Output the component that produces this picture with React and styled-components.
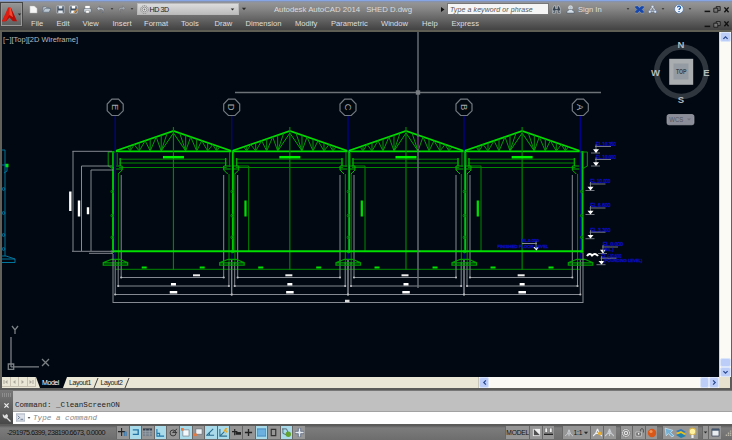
import React from "react";
import styled, { createGlobalStyle } from "styled-components";

const GlobalStyle = createGlobalStyle`
  * { box-sizing: border-box; }
  body { margin: 0; overflow: hidden; background: #555; }
`;

const Window = styled.div`
  width: 732px;
  height: 440px;
  display: flex;
  flex-direction: column;
  overflow: hidden;
  background: #5b5b5a;
  font-family: "Liberation Sans", Arial, sans-serif;
  font-size: 7.6px;
  color: #dedede;
  white-space: nowrap;
`;

const Header = styled.header`
  height: 30px;
  display: flex;
  flex: none;
  border-top: 1px solid #86a5e4;
  background: linear-gradient(#8292b5 0, #949494 2px, #858585 8px, #686868 17px, #454545 28px);
`;

const AppButton = styled.div`
  width: 23px;
  height: 25px;
  margin: 1px 1px 0 0;
  display: flex;
  align-items: center;
  justify-content: center;
  border: 1px solid #454545;
  box-shadow: inset 0 0 0 1px #999;
  background: linear-gradient(#969696, #5e5e5e);

  svg { flex: none; }
`;

const HeaderBody = styled.div`
  flex: 1;
  display: flex;
  flex-direction: column;
`;

const TitleRow = styled.div`
  height: 16px;
  padding-left: 2.5px;
  display: flex;
  align-items: center;
`;

const Cell = styled.span`
  width: ${(p) => p.$w}px;
  flex: none;
  height: 100%;
  display: flex;
  align-items: center;
  justify-content: ${(p) => (p.$left ? "flex-start" : "center")};
  padding-left: ${(p) => (p.$left ? 2 : 0)}px;
`;

const Title = styled(Cell)`
  font-size: 7.8px;
  gap: 6px;
  padding-top: 1px;
  color: #dadada;
`;

const Field = styled.div`
  width: ${(p) => p.$w}px;
  height: 12px;
  margin-left: ${(p) => p.$gap || 0}px;
  padding: 0 3px 0 2px;
  flex: none;
  display: flex;
  align-items: center;
  gap: 1px;
  border: 1px solid ${(p) => (p.$search ? "#777" : "#b9b9b9")};
  background: ${(p) => (p.$search ? "#f5f5f5" : "linear-gradient(#dcdcdc, #bdbdbd)")};
  color: ${(p) => (p.$search ? "#555" : "#222")};
  font-style: ${(p) => (p.$search ? "italic" : "normal")};
  font-size: ${(p) => (p.$search ? 7 : 7.2)}px;
  letter-spacing: ${(p) => (p.$search ? 0.1 : -0.5)}px;
`;

const Fill = styled.span`
  flex: 1;
`;

const MenuRow = styled.nav`
  height: 13px;
  padding-left: 7px;
  display: flex;
  align-items: center;
`;

const MenuItem = styled.span`
  width: ${(p) => p.$w}px;
  flex: none;
`;

const MenuControls = styled.span`
  margin-left: auto;
  padding-right: 1px;
  height: 100%;
  display: flex;
`;

const Workspace = styled.main`
  height: 347px;
  flex: none;
  display: flex;
  border: 2px solid #626159;
  border-top-color: #5f5e55;
  border-bottom: 0;
`;

const Viewport = styled.div`
  width: 716.5px;
  height: 345px;
  flex: none;
  background: #010811;
`;

const VScroll = styled.div`
  flex: 1;
  display: flex;
  flex-direction: column;
  background: #fbfaf5;
  border-left: 1px solid #d5d3ca;
`;

const ScrollKey = styled.div`
  width: ${(p) => p.$w || 11}px;
  height: ${(p) => p.$h || 10}px;
  flex: none;
  display: flex;
  align-items: center;
  justify-content: center;
  border: 1px solid #dce6fb;
  border-radius: 2px;
  background: #bccdf8;
`;

const TabBar = styled.div`
  height: 11px;
  flex: none;
  display: flex;
  margin: 0 2px;
  background: #ebe7d6;
  color: #1d1d1d;
  font-size: 7px;
  letter-spacing: -0.4px;
`;

const NavKey = styled.div`
  width: 8.5px;
  height: 10px;
  display: flex;
  align-items: center;
  justify-content: center;
  border-right: 1px solid #c6c1b0;
  border-bottom: 1px solid #c6c1b0;
`;

const ModelTab = styled.div`
  width: 31px;
  padding-right: 2px;
  display: flex;
  align-items: center;
  justify-content: center;
  color: #fff;
  background: #010811;
  clip-path: polygon(0 0, 100% 0, 87% 100%, 13% 100%);
`;

const LayoutTab = styled.div`
  width: 31.5px;
  padding-left: 2px;
  display: flex;
  align-items: center;
  justify-content: space-between;
`;

const HScroll = styled.div`
  width: 241px;
  display: flex;
  background: #fbf9f3;
  border-left: 1px solid #c9c6ba;
`;

const Corner = styled.div`
  width: 11px;
  background: #e6e2cf;
`;

const CommandPanel = styled.section`
  height: 34px;
  margin-top: 2px;
  flex: none;
  display: flex;
  border-top: 1px solid #777;
`;

const CommandGrip = styled.div`
  width: 13px;
  display: flex;
  flex-direction: column;
  align-items: center;
  justify-content: space-between;
  padding: 2px 0;
  background: linear-gradient(#777, #484848);
`;

const CommandBody = styled.div`
  flex: 1;
  display: flex;
  flex-direction: column;
  font-family: "Liberation Mono", "Courier New", monospace;
`;

const History = styled.div`
  height: 20.5px;
  padding: 9.5px 0 0 2px;
  line-height: 9px;
  background: #c0c0c0;
  border-bottom: 1px solid #a2a2a2;
  color: #222;
`;

const Prompt = styled.div`
  flex: 1;
  display: flex;
  align-items: center;
  padding-left: 3px;
  gap: 2px;
  background: #fff;
  color: #898989;
  font-style: italic;
  font-size: 7.65px;
`;

const StatusBar = styled.footer`
  height: 15px;
  margin-top: auto;
  flex: none;
  display: flex;
  align-items: center;
  background: linear-gradient(#555, #7c7c7c 3px, #6d6d6d);
  color: #121212;
`;

const Coordinates = styled.div`
  width: 116px;
  padding-left: 7px;
  flex: none;
  font-size: 7.2px;
  letter-spacing: -0.56px;
`;

const Toggle = styled.div`
  width: ${(p) => p.$w || 12.6}px;
  height: 13px;
  margin-left: ${(p) => p.$gap || 0}px;
  flex: none;
  display: flex;
  align-items: center;
  justify-content: center;
  gap: 1px;
  border-left: 1px solid ${(p) => (p.$plain ? "transparent" : "#686868")};
  background: ${(p) => (p.$on ? "#a9dbea" : p.$plain ? "transparent" : "#969696")};
  font-size: 6.7px;
  letter-spacing: -0.2px;

  svg { flex: none; }
`;

const art = {
  logo: <><path d="M5 0.5 0 9.5h2.7L5 7l2.3 2.5H10L6 .5z" fill="#b80c08" /><path d="M5 .5 2.6 6.8 5 5.3l2.4 1.5L5.8.5z" fill="#f24a32" /><path d="M5 0v5L2.5 9.5H0L4 .5z" fill="#db1d12" /></>,
  file: <path d="M1 1h5l3 3v5H1z" fill="#f6f6f6" stroke="#aaa" strokeWidth=".5" />,
  open: <><path d="M1 8V2h3l1 1h3v2" fill="#d0d6dc" stroke="#697684" /><path d="m1 8 2-4h7L8 8z" fill="#bdcad5" stroke="#566574" strokeWidth=".7" /></>,
  save: <><path d="M1 1h8v8H1z" fill="#405064" stroke="#cbd2da" strokeWidth=".7" /><path d="M3 1h4v3H3zM2.5 6h5v3h-5z" fill="#e4e9ee" /></>,
  saveas: <><path d="M1 1h8v8H1z" fill="#405064" stroke="#e4e7ea" strokeWidth=".7" /><path d="M3 1h4v3H3zM2.5 6h4v3h-4z" fill="#fff" /><path d="m5 8 4-4 1 1-4 4z" fill="#e6a54e" stroke="#8e501d" strokeWidth=".4" /></>,
  print: <><path d="M2.5 1h5v4h-5z" fill="#fff" /><path d="M1 4h8v4H1z" fill="#dce4eb" stroke="#59636d" strokeWidth=".7" /><path d="M3 6h4v3H3z" fill="#fff" stroke="#666" strokeWidth=".5" /></>,
  undo: <path d="M4 1 1 4l3 3V5h2c2 0 2 2 1 4 3-3 2-6-1-6H4z" fill="#c5ced9" stroke="#505966" strokeWidth=".5" />,
  redo: <path d="m6 1 3 3-3 3V5H4C2 5 2 7 3 9 0 6 1 3 4 3h2z" fill="#a3a9af" stroke="#5d6368" strokeWidth=".4" />,
  down: <path d="m1.5 3 3.5 4 3.5-4z" fill="#292929" />,
  right: <path d="m2 0 7 5-7 5z" fill="#111" />,
  gear: <><circle cx="5" cy="5" r="4.2" fill="#e2e2e2" stroke="#777" strokeWidth="1" strokeDasharray="1.6 .7" /><circle cx="5" cy="5" r="2.7" fill="none" stroke="#888" /><circle cx="5" cy="5" r="1" fill="#777" /></>,
  binoculars: <><path d="M2 1h2v3h2V1h2l1.5 4v4H6V6H4v3H.5V5z" fill="#344250" stroke="#cbd0d5" strokeWidth=".7" /><path d="M2 6v2M8 6v2" stroke="#ddd" /></>,
  user: <><circle cx="5" cy="3" r="2.2" fill="#b9c8d6" stroke="#eee" strokeWidth=".7" /><path d="M1 9V7l3-2h2l3 2v2z" fill="#d2dde7" stroke="#455769" strokeWidth=".6" /></>,
  exchange: <path d="M0 1h3l2 2 2-2h3v2L8 5l2 2v2H7L5 7 3 9H0V7l2-2-2-2z" fill="#1646aa" stroke="#9db2d5" strokeWidth=".5" />,
  network: <><path d="M5 2 2 7h6z" fill="none" stroke="#c4d3e6" strokeWidth="1.2" /><circle cx="5" cy="2" r="1.6" fill="#dfe9f5" stroke="#405880" strokeWidth=".5" /><circle cx="2" cy="7.5" r="1.6" fill="#dfe9f5" stroke="#405880" strokeWidth=".5" /><circle cx="8" cy="7.5" r="1.6" fill="#dfe9f5" stroke="#405880" strokeWidth=".5" /></>,
  help: <><circle cx="5" cy="5" r="4.4" fill="#ecf5ff" stroke="#365f95" strokeWidth=".5" /><path d="M3.5 3.5c.2-2 3.2-1.6 3 .1C6.4 4.7 5 4.7 5 6M5 7v1" fill="none" stroke="#1554a9" strokeWidth="1.2" /></>,
  min: <path d="M2 8h7" stroke="#131313" strokeWidth="1.9" />,
  restore: <><path d="M4 2h5v5H4z" fill="#777" stroke="#111" /><path d="M1 4h5v5H1z" fill="#777" stroke="#111" /></>,
  close: <path d="m2 2 6 7m0-7L2 9" stroke="#111" strokeWidth="2" />,
  closeLight: <path d="m2 2 6 6m0-6L2 8" stroke="#eee" strokeWidth="1.8" />,
  wrench: <path d="M1 1l2 2 2-2c2 1 2 3 1 4l4 4-1 1-4-4C3 7 0 4 1 1z" fill="#ddd" />,
  prompt: <><path d="M0 1h10v8H0z" fill="#dce1ea" stroke="#a2abb8" /><path d="m2 3 2 2-2 2m3 0h3" fill="none" stroke="#627187" /></>,
  up: <path d="m2 7 3-3 3 3" fill="none" stroke="#2b4a91" strokeWidth="1.8" />,
  chevronDown: <path d="m2 3 3 3 3-3" fill="none" stroke="#2b4a91" strokeWidth="1.8" />,
  left: <path d="M7 2 4 5l3 3" fill="none" stroke="#2b4a91" strokeWidth="1.8" />,
  next: <path d="m3 2 3 3-3 3" fill="none" stroke="#2b4a91" strokeWidth="1.8" />,
  infer: <><path d="M4 0v9M0 4h8" stroke="#222" strokeWidth="1.2" /><path d="M7 4v5M9 4v5" stroke="#2675b6" /></>,
  snap: <path d="M2 2h6v5H2" fill="none" stroke="#2475a6" strokeWidth="1.5" />,
  grid: <><path d="M0 1h10v8H0z" fill="#74808c" /><path d="M0 1.5h10" stroke="#333d4b" strokeWidth="2" /><path d="M0 4h10M0 6.5h10M3 1v8M7 1v8" stroke="#a6adb3" strokeWidth=".6" /></>,
  ortho: <path d="M1 1v8h8M1 6h3v3" fill="none" stroke="#2377a8" strokeWidth="1.2" />,
  polar: <><circle cx="4.5" cy="5.5" r="3.3" fill="none" stroke="#333" /><path d="m4 5 5-4M4 5h5" stroke="#333" /></>,
  osnap: <><path d="M2 2h7v7H2z" fill="#f2f8fb" stroke="#8794a0" /><path d="M0 0h3v3H0z" fill="#e9783b" /></>,
  cube: <><path d="M2 1h7v6H2z" fill="#edf1f4" stroke="#515b64" strokeWidth=".6" /><path d="M0 6h3v3H0z" fill="#e9783b" /></>,
  angle: <path d="M8 1 1 8h8M4 8c0-2-1-3-1-3" fill="none" stroke="#2b6e90" strokeWidth="1.2" />,
  ducs: <><path d="M1 1v8h8M1 9l5-5" fill="none" stroke="#2f7190" strokeWidth="1.2" /><path d="M7 0 5 4h3L6 8l4-5H8l1-3z" fill="#e9a61d" /></>,
  dyn: <><path d="M3 1v7M0 4h6" stroke="#222" strokeWidth="1.3" /><path d="M4 4.5h6v3H4z" fill="#222" /></>,
  plus: <path d="M5 1v8M1 5h8" stroke="#222" strokeWidth="1.5" />,
  square: <path d="M0 1h10v8H0z" fill="#6bb0df" stroke="#3f85b9" />,
  rect: <path d="M2.5 1.5h5v7h-5z" fill="none" stroke="#333" strokeWidth="1.3" />,
  cycle: <><path d="M0 1h5l3 7M1 1v5l5 2" fill="none" stroke="#51626d" /><circle cx="7" cy="7" r="3" fill="#62a333" /></>,
  cross: <path d="M3.7 0h2.6v3.7H10v2.6H6.3V10H3.7V6.3H0V3.7h3.7z" fill="#e4e8ef" stroke="#536079" strokeWidth=".8" />,
  paper: <><path d="M1 1h8v8H1z" fill="#eee" /><path d="M2 1v7h7z" fill="#505050" /></>,
  views: <><path d="M1 0h3v5H1zM6 0h3v5H6z" fill="#eee" stroke="#333" strokeWidth=".5" /><path d="M0 7h10" stroke="#222" strokeWidth="1.5" /></>,
  scale: <path d="M5 1 3 6 0 9m5-8 2 5 3 3M3 6h4M5 1v8" fill="none" stroke="#c9cdd1" strokeWidth="1.2" />,
  scaleSun: <><path d="M5 1 3 6 0 9m5-8 2 5 3 3M3 6h4" fill="none" stroke="#eceef1" strokeWidth="1.3" /><circle cx="7.5" cy="6" r="2" fill="#e6ad31" /></>,
  lock: <><path d="M6 5V3c0-3 3.5-3 3.5 0v2" fill="none" stroke="#444" /><path d="M1 4.5h6V9H1z" fill="#555" stroke="#ccc" /><path d="M3 5.5h2v2H3z" fill="#eee" /></>,
  orange: <><circle cx="5" cy="5" r="4.2" fill="#d85719" /><circle cx="4" cy="3.5" r="1.6" fill="#f09559" /></>,
  isolate: <path d="m1 1 7 2-2 2 3 3-2 1-3-3-2 2z" fill="#73b0d4" stroke="#d6edf7" strokeWidth=".6" />,
  layers: <><path d="m0 3 5-2 5 3-5 2z" fill="#3276b8" /><path d="m0 5 5-2 5 3-5 2z" fill="#e8c51c" /><path d="m0 7 5-2 5 3-5 2z" fill="#267fa9" /></>,
  bulb: <><circle cx="5" cy="4" r="3" fill="#fff1a0" stroke="#d3ae4a" /><path d="M4 7h2v3H4z" fill="#eee" /></>,
  screen: <><path d="M1 1h8v8H1z" fill="#e9edf0" stroke="#454f60" /><path d="M1 2h8" stroke="#44556e" strokeWidth="2" /></>,
  grip: <path d="M1 9h2M4 9h2M7 9h2M4 6h2M7 6h2M7 3h2" stroke="#b8b5a8" strokeWidth="2" />,
};

function Icon({ name, size = 9 }) {
  return <svg width={size} height={size} viewBox="0 0 10 10" aria-hidden="true">{art[name]}</svg>;
}

const axes = [
  { label: "E", x: 115.2 }, { label: "D", x: 231.7 }, { label: "C", x: 348 },
  { label: "B", x: 464 }, { label: "A", x: 580.3 },
];

function Truss({ x, width }) {
  const half = width / 2;
  const tops = [12, 19, 30, 41, 52];
  const feet = [15, 24, 35, 46];
  const roof = (n) => 151 - (n / half) * 20;
  const web = feet.map((f, i) => (
    `M${tops[i]} ${roof(tops[i])}L${f} 151L${tops[i + 1]} ${roof(tops[i + 1])}M${f} 151V${roof(f)}`
  )).join("");
  return (
    <>
      <path d={`M${x} 151l${half} -20l${half} 20`} stroke="#00dd00" strokeWidth="1.8" fill="none" />
      <path d={`M${x} 151.4h${width}`} stroke="#00dd00" strokeWidth="1.9" />
      <g stroke="#069806" strokeWidth="1" fill="none">
        <path transform={`translate(${x} 0)`} d={web} />
        <path transform={`translate(${x + width} 0) scale(-1 1)`} d={web} />
        <path d={`M${x + 46} 151l${half - 46} -18l${half - 46} 18`} stroke="#00a800" />
      </g>
      <path d={`M${x + half} 127v143`} stroke="#008400" strokeWidth="1.2" />
    </>
  );
}

function Bay({ start, end, index }) {
  const mid = (start + end) / 2;
  return (
    <g>
      <Truss x={start} width={end - start} />
      <g stroke="#008900" fill="none" strokeWidth="1">
        <path d={`M${start + 4} 159.2H${end - 5}M${start + 4} 163H${end - 5}M${start + 4} 167.5H${end - 5}M${start + 5} 158v8M${end - 6} 158v8`} />
        <path d={`M${start} 269.3H${end}`} />
        <path d={`M${start + 3.2} 174V264M${end - 2.7} 174V264`} />
        {index > 0 && <path d={`M${start + 4} 166h13v85`} />}
      </g>
      <path d={`M${mid - 10.5} 157.2h21`} stroke="#00f000" strokeWidth="2.5" />
      {index > 0 && <path d={`M${start + 13.8} 200.5v16`} stroke="#00dc00" strokeWidth="2.3" />}
      <path d={`M${start + 26.5} 267.5h5M${start + 84.5} 267.5h5`} stroke="#00df00" strokeWidth="2" />
      <g stroke="#858991" strokeWidth="1" fill="none">
        <path d={`M${start + 6} 175V278M${end - 8} 175V278M${start + 6} 277.5H${end - 8}`} />
        <path d={`M${start + 3} 262V287M${end - 2.8} 262V287M${start + 3} 286H${end - 2.8}`} />
        <path d={`M${start} 260V295M${end} 260V295M${start} 294.5H${end}`} />
      </g>
      <g fill="#b9bbbf">
        {[[6, -8, 277.5], [3, -2.8, 286], [0, 0, 294.5]].map(([a, b, y]) => (
          <React.Fragment key={y}><circle cx={start + a} cy={y} r="1.1" /><circle cx={end + b} cy={y} r="1.1" /></React.Fragment>
        ))}
      </g>
      <path d={index === 0 ? "M193 275.3h7" : `M${mid - 4.5} 275.3h7`} stroke="#eee" strokeWidth="2" />
      <path d={`M${mid - 2.5} 284.3h5M${mid - 3.7} 292.2h7.5`} stroke="#fff" strokeWidth="2.6" />
    </g>
  );
}

function Column({ x, label }) {
  const first = label === "E";
  const last = label === "A";
  const edge = first ? x - 2.2 : last ? x + 2.2 : x + 1.2;
  return (
    <g>
      <path d={`M${x} 116V260`} stroke="#03038f" strokeWidth="1.3" />
      <path d={`M${edge} 151V253`} stroke="#00c900" strokeWidth="1.9" />
      {!first && <path d={`M${x - 1} 166h-7v4l4 4M${x - 6} 158v8M${x - 8} 169h7`} stroke="#00b400" fill="none" />}
      {!last && <path d={`M${x + 1} 166h6v4l-4 4M${x + 5} 158v8M${x + 1} 169h6`} stroke="#00b400" fill="none" />}
      {(first || last) && <path d={`M${x} 152h${first ? -7 : 7}v14l${first ? 5 : -5} 3`} stroke="#009b00" fill="none" />}
      {!last && <path d={`M${x - 2} 152v15M${x + 2} 153v12`} stroke="#008900" fill="none" />}
      <path d={`M${x - 12} 265.2h24.5v-2.6l-8 -3.3h-8l-8.5 3.3zM${x - 12} 262.8h24.5`} stroke="#009f00" fill="none" strokeWidth="1.2" />
      {[191.5, 215.6, 237.3, 251.5].map((y) => <circle key={y} cx={edge - 0.7} cy={y} r="1.4" fill="none" stroke="#008900" />)}
      <path d={`M${x - 3.3} 99.1h6.6l4.7 4.9v6.8l-4.7 4.7h-6.6l-4.7 -4.7v-6.8z`} fill="#01070e" stroke="#747a82" strokeWidth="1.2" />
      <text transform={`translate(${x} 107.2) rotate(90)`} y="3.3" textAnchor="middle" fill="#a2a7ad" fontSize="9.4">{label}</text>
    </g>
  );
}

function Level({ x, y, text }) {
  return (
    <g>
      <text x={x + 1} y={y - 6.7} textLength="20" lengthAdjust="spacingAndGlyphs" fill="#1212d8" stroke="#0a0ac0" strokeWidth=".3" fontSize="4.6">{text}</text>
      <path d={`M${x} ${y - 6}h16M${x + 1} ${y - 8}v7M${x - 4} ${y + 0.5}h9`} stroke="#7e838b" strokeWidth=".9" />
      <path d={`M${x - 2} ${y - 3.2}h6l-3 3.6z`} fill="#fff" />
    </g>
  );
}

function Drawing() {
  return (
    <svg width="716.5" height="345" viewBox="2 32 716.5 345" fontFamily="Liberation Sans, sans-serif">
      <text x="3" y="42.4" fill="#b9b9b9" fontSize="7.7" textLength="75" lengthAdjust="spacingAndGlyphs">[−][Top][2D Wireframe]</text>
      <g stroke="#00759d" fill="none" strokeWidth="1">
        <path d="M1 150h4v106M1 165h6v6l-3 2M1 256h5l9 3v3.5H1M2 259h13M1 262.5h14" />
        {[189, 213, 235, 249].map((y) => <circle key={y} cx="3.5" cy={y} r="1.4" />)}
        <path d="M5.5 165.5h3" stroke="#00dd20" strokeWidth="3.5" />
      </g>
      {axes.slice(0, -1).map((a, i) => <Bay key={a.label} start={a.x} end={axes[i + 1].x} index={i} />)}
      {axes.map((a) => <Column key={a.label} {...a} />)}
      <path d="M113 251.3H583" stroke="#00df00" strokeWidth="1.9" />
      <g stroke="#858991" fill="none">
        <path d="M72.5 151.3H112M73 151v100M81.5 166H112M81.5 166v85M91 170H113M91 170v81M72 251.3h41M89 253.3h24" />
        <path d="M113 254v49M583 253v50M113 302.5h470" />
      </g>
      <path d="M70.3 191.5v19.5M79 200.5v16M88 207.3v7" stroke="#fff" strokeWidth="2.4" />
      <path d="M345 301h4.5" stroke="#ddd" strokeWidth="2.5" />
      <Level x={595} y={152.5} text="EL.10.350" />
      <Level x={595} y={165.5} text="EL.10.000" />
      <Level x={589.5} y={190} text="EL.10.000" />
      <Level x={589.5} y={214} text="EL.6.600" />
      <Level x={589.5} y={238.2} text="EL.3.300" />
      <Level x={602} y={253} text="EL.0.000" />
      <Level x={600.5} y={264.2} text="EL.(-)0.600" />
      <path d="M587 256c2-3 4-2 5-.5 2-2 4-2 6 .5" stroke="#fff" fill="none" strokeWidth="2" />
      <path d="M522 243.5h15M536 241v8" stroke="#858991" /><path d="M533 247h6l-2.5 3.4z" fill="#fff" />
      <g fill="#1212d8" stroke="#0a0ac0" strokeWidth=".3" fontSize="4.2">
        <text x="522" y="242.2">EL.0.000</text>
        <text x="497.5" y="247.6" textLength="51" lengthAdjust="spacingAndGlyphs">FINISHED FLOOR LEVEL</text>
        <text x="603" y="250.8">(G.L.)</text>
        <text x="603.5" y="262.4" textLength="39" lengthAdjust="spacingAndGlyphs">(FOUNDING LEVEL)</text>
      </g>
      <path d="M235 92.5h366M418 32v256" stroke="#6d7278" strokeWidth="1.4" />
      <path d="M418 137v12" stroke="#641664" strokeWidth="1.4" />
      <path d="M415.8 90.3h4.4v4.4h-4.4z" fill="#777c82" />
      <circle cx="681.3" cy="71.8" r="24.7" fill="none" stroke="#30363e" strokeWidth="5.5" />
      <path d="M669.2 58.8h24v26h-24z" fill="#a9adb0" />
      <path d="M673.5 63.5h15v16h-15z" fill="#949ba2" />
      <text x="681.2" y="74.2" textAnchor="middle" fontSize="6.4" fontWeight="bold" textLength="10.5" lengthAdjust="spacingAndGlyphs" fill="#39424c">TOP</text>
      <g fill="#b7babd" fontSize="9.5" fontWeight="bold" textAnchor="middle">
        <text x="681" y="48">N</text><text x="681" y="102.7">S</text><text x="655.6" y="75.5">W</text><text x="706.5" y="75.5">E</text>
      </g>
      <rect x="667" y="114.5" width="27" height="10.3" rx="2" fill="#8b8d98" stroke="#a4a5ae" strokeWidth=".7" />
      <text x="669.3" y="122" fontSize="6.8" textLength="14" lengthAdjust="spacingAndGlyphs" fill="#555862">WCS</text>
      <path d="m687 118.5 2 2 2-2" fill="#74757e" />
      <path d="M11 337v30M11 366.8h28M8.3 364h5.4v5.4H8.3zM12 326l3 4 3-4m-3 4v4M42 359l7 7m0-7-7 7" fill="none" stroke="#7b8085" strokeWidth="1.3" />
    </svg>
  );
}

const menus = [["File", 25.5], ["Edit", 26], ["View", 30], ["Insert", 31.5], ["Format", 37], ["Tools", 33.5], ["Draw", 31], ["Dimension", 49.5], ["Modify", 36], ["Parametric", 50], ["Window", 41], ["Help", 29.5], ["Express", 30]];
const toggles = [["infer"], ["snap", 1], ["grid"], ["ortho", 1], ["polar"], ["osnap", 1], ["cube"], ["angle", 1], ["ducs", 1], ["dyn"], ["plus"], ["square", 1], ["rect"], ["cycle", 1], ["cross"]];

function WindowControls() {
  return <><Cell $w={10}><Icon name="min" size={8} /></Cell><Cell $w={10}><Icon name="restore" size={8} /></Cell><Cell $w={9}><Icon name="close" size={7} /></Cell></>;
}

export default function App() {
  return (
    <>
      <GlobalStyle />
      <Window>
        <Header>
          <AppButton><Icon name="logo" size={15} /><Icon name="down" size={5} /></AppButton>
          <HeaderBody>
            <TitleRow>
              {["file", "open", "save", "saveas", "print", "undo"].map((n) => <Cell $w={13.5} key={n}><Icon name={n} /></Cell>)}
              <Cell $w={8}><Icon name="down" size={4} /></Cell>
              <Cell $w={13}><Icon name="redo" size={8} /></Cell>
              <Cell $w={7}><Icon name="down" size={4} /></Cell>
              <Field $w={102.5} $gap={1}><Icon name="gear" /><span>HD 3D</span><Fill /><Icon name="down" size={5} /></Field>
              <Cell $w={9}><Icon name="down" size={6} /></Cell>
              <Title $w={190}><span>Autodesk AutoCAD 2014</span><span>SHED D.dwg</span></Title>
              <Cell $w={9}><Icon name="right" size={5} /></Cell>
              <Field $w={102} $search>Type a keyword or phrase</Field>
              <Cell $w={15}><Icon name="binoculars" /></Cell>
              <Cell $w={12}><Icon name="user" /></Cell>
              <Cell $w={46} $left>Sign In</Cell>
              <Cell $w={12}><Icon name="down" size={4} /></Cell>
              <Cell $w={11}><Icon name="exchange" /></Cell>
              <Cell $w={14}><Icon name="network" /></Cell>
              <Cell $w={7}><Icon name="down" size={4} /></Cell>
              <Cell $w={6} />
              <Cell $w={14}><Icon name="help" size={10} /></Cell>
              <Cell $w={8}><Icon name="down" size={4} /></Cell>
              <Fill /><WindowControls /><Cell $w={1} />
            </TitleRow>
            <MenuRow>
              {menus.map(([name, w]) => <MenuItem key={name} $w={w}>{name}</MenuItem>)}
              <MenuControls><WindowControls /></MenuControls>
            </MenuRow>
          </HeaderBody>
        </Header>
        <Workspace>
          <Viewport><Drawing /></Viewport>
          <VScroll><ScrollKey><Icon name="up" size={7} /></ScrollKey><Fill /><ScrollKey $h={9} /><ScrollKey><Icon name="chevronDown" size={7} /></ScrollKey></VScroll>
        </Workspace>
        <TabBar>
          {["first", "prev", "next", "last"].map((s) => <NavKey key={s}><svg width="6" height="6" viewBox="0 0 6 6"><path d={s === "first" || s === "prev" ? "M4.5 1 2 3l2.5 2z" : "m1.5 1 2.5 2-2.5 2z"} fill="#aaa79b" />{s === "first" && <path d="M1 1v4" stroke="#aaa79b" />}{s === "last" && <path d="M5 1v4" stroke="#aaa79b" />}</svg></NavKey>)}
          <ModelTab>Model</ModelTab>
          {["Layout1", "Layout2"].map((s) => <LayoutTab key={s}>{s}<svg width="6" height="10" viewBox="0 0 6 10"><path d="M5 0 1 10" stroke="#333" strokeWidth=".9" /></svg></LayoutTab>)}
          <Fill />
          <HScroll><ScrollKey $w={10} $h={11}><Icon name="left" size={7} /></ScrollKey><Fill /><ScrollKey $w={9} $h={11} /><ScrollKey $w={10} $h={11}><Icon name="next" size={7} /></ScrollKey></HScroll>
          <Corner />
        </TabBar>
        <CommandPanel>
          <CommandGrip><svg width="9" height="4"><path d="M0 1h9M0 3h9" stroke="#aaa" strokeDasharray="1 1" /></svg><Icon name="closeLight" size={7} /><Icon name="wrench" /></CommandGrip>
          <CommandBody><History>Command: _CleanScreenON</History><Prompt><Icon name="prompt" /><Icon name="down" size={4} /><span>Type a command</span></Prompt></CommandBody>
        </CommandPanel>
        <StatusBar>
          <Coordinates>-291975.6399, 238190.6673, 0.0000</Coordinates>
          {toggles.map(([name, on]) => <Toggle key={name} $on={on}><Icon name={name} /></Toggle>)}
          <Fill />
          <Toggle $w={24}>MODEL</Toggle><Toggle><Icon name="paper" /></Toggle><Toggle><Icon name="views" /></Toggle>
          <Toggle $w={28} $gap={8}><Icon name="scale" size={8} />1:1<Icon name="down" size={6} /></Toggle><Toggle><Icon name="scaleSun" /></Toggle><Toggle><Icon name="scale" /></Toggle>
          <Toggle $gap={4}><Icon name="gear" size={10} /></Toggle><Toggle><Icon name="lock" /></Toggle><Toggle><Icon name="orange" size={10} /></Toggle>
          <Toggle $w={36} $gap={5}><Icon name="isolate" size={11} /><Icon name="layers" size={10} /><Icon name="bulb" size={11} /></Toggle>
          <Toggle $w={6} $gap={4}><Icon name="down" size={5} /></Toggle><Toggle><Icon name="screen" /></Toggle><Toggle $w={9} $gap={2} $plain><Icon name="grip" size={7} /></Toggle>
        </StatusBar>
      </Window>
    </>
  );
}
